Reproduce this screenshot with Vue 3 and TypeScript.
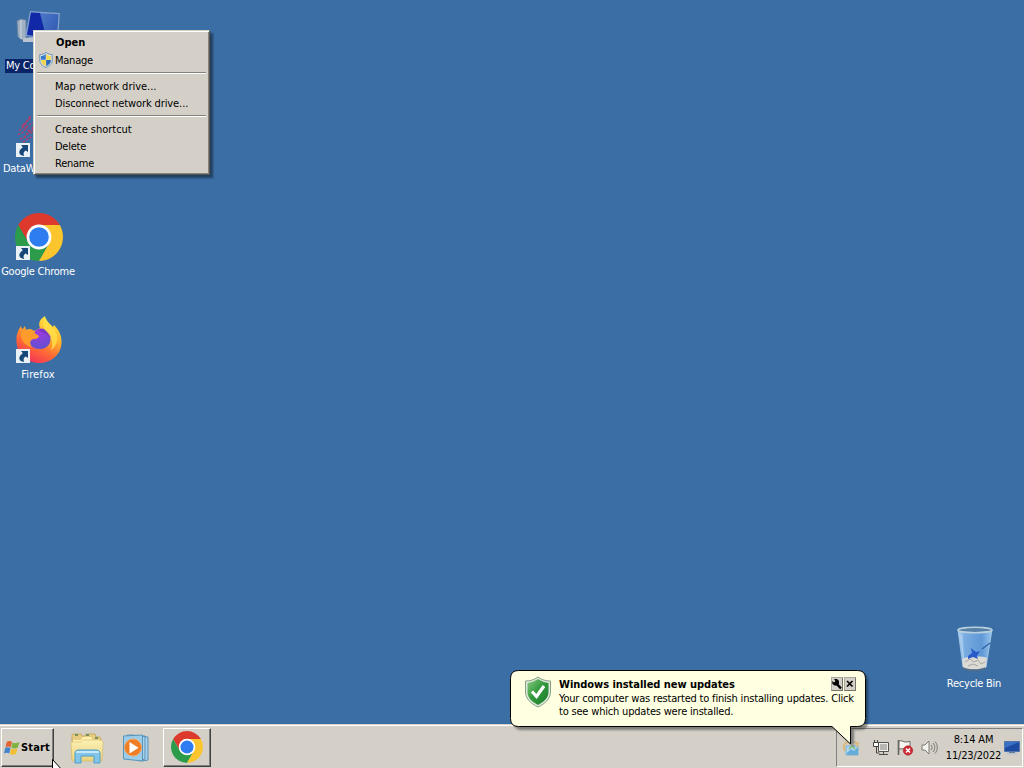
<script setup lang="ts">
interface DesktopItem {
  id: string
  label: string
  shortcut: boolean
}

interface MenuEntry {
  label: string
  bold?: boolean
  shield?: boolean
  spacing?: 'wide' | 'medium'
}

const items: DesktopItem[] = [
  { id: 'computer', label: 'My Co', shortcut: false },
  { id: 'dataw', label: 'DataW', shortcut: true },
  { id: 'chrome', label: 'Google Chrome', shortcut: true },
  { id: 'firefox', label: 'Firefox', shortcut: true },
  { id: 'recycle', label: 'Recycle Bin', shortcut: false },
]

const menu: MenuEntry[][] = [
  [{ label: 'Open', bold: true }, { label: 'Manage', shield: true }],
  [
    { label: 'Map network drive...', spacing: 'wide' },
    { label: 'Disconnect network drive...', spacing: 'medium' },
  ],
  [{ label: 'Create shortcut', spacing: 'wide' }, { label: 'Delete' }, { label: 'Rename' }],
]
</script>

<template>
  <div class="screen">
    <svg class="defs" width="0" height="0" aria-hidden="true">
      <defs>
        <linearGradient id="ffBody" x1=".8" y1="0" x2=".3" y2="1">
          <stop offset="0" stop-color="#fff04a" />
          <stop offset=".38" stop-color="#ffb42c" />
          <stop offset=".68" stop-color="#ff6a35" />
          <stop offset="1" stop-color="#f0305c" />
        </linearGradient>
        <radialGradient id="ffGlobe" cx=".5" cy=".2" r=".8">
          <stop offset="0" stop-color="#a03ae0" />
          <stop offset="1" stop-color="#6050d0" />
        </radialGradient>
        <linearGradient id="glass" x1="0" x2="1">
          <stop offset="0" stop-color="#b4d4f2" />
          <stop offset=".2" stop-color="#78abe0" />
          <stop offset=".7" stop-color="#5f98d6" />
          <stop offset="1" stop-color="#9cc6ee" />
        </linearGradient>
        <linearGradient id="monitor" x1="0" x2="1" y2=".4">
          <stop offset="0" stop-color="#5d86d6" />
          <stop offset="1" stop-color="#3560b4" />
        </linearGradient>
        <linearGradient id="greenShield" x1="0" y1="0" x2="1" y2="1">
          <stop offset="0" stop-color="#8ccc83" />
          <stop offset=".45" stop-color="#359b3e" />
          <stop offset="1" stop-color="#17792a" />
        </linearGradient>
        <linearGradient id="folder" x1="0" y1="0" x2="0" y2="1">
          <stop offset="0" stop-color="#fbf0b4" />
          <stop offset="1" stop-color="#ecd27c" />
        </linearGradient>
      </defs>
      <symbol id="chromeLogo" viewBox="0 0 48 48">
        <path fill="#dd3a2d" d="M3.22 12A24 24 0 0 1 44.78 12H24A12 12 0 0 0 13.61 30Z" />
        <path fill="#2c9c4b" d="M3.22 12A24 24 0 0 0 24 48L34.39 30A12 12 0 0 1 13.61 30Z" />
        <path fill="#fbc52d" d="M24 48A24 24 0 0 0 44.78 12H24A12 12 0 0 1 34.39 30Z" />
        <circle cx="24" cy="24" r="12.400" fill="#fff" />
        <circle cx="24" cy="24" r="9.8" fill="#2e7df0" />
      </symbol>
    </svg>

    <div v-for="item in items" :key="item.id" class="icon" :class="item.id">
      <div class="picture">
        <svg v-if="item.id === 'computer'" viewBox="0 0 48 48">
          <path d="M2 14l4-2 5 1v18l-4 2-4-3z" fill="#9fb0c2" stroke="#6c8098" stroke-width=".7" />
          <path d="M6 13v19" stroke="#cfd9e4" />
          <path d="M15 4l30 2-2 26-33-3z" fill="#7f9fce" />
          <path d="M16 5.500l27.500 1.700-1.500 22-30-2z" fill="url(#monitor)" />
          <path d="M16 5.500l9 .5 6 24-19-2z" fill="#1129a6" />
          <path d="M8 31l12-1 6 5H8z" fill="#b9c4ce" />
        </svg>
        <svg v-else-if="item.id === 'dataw'" viewBox="0 0 48 48">
          <g fill="none" stroke="#b33c68" stroke-width="1.600" stroke-dasharray="2.200 1.600">
            <path d="M4 20c5 0 4-8 12-12" />
            <path d="M3 24c7 1 6-9 15-11" />
            <path d="M5 29c6 0 7-8 14-9" />
            <path d="M8 32c4-2 5-5 12-5M8 14c3 2 5 8 9 9M15 6c-2 6-6 8-9 12M18 17c-3 5-7 6-9 12" />
          </g>
        </svg>
        <svg v-else-if="item.id === 'chrome'"><use href="#chromeLogo" /></svg>
        <svg v-else-if="item.id === 'firefox'" viewBox="0 0 48 48">
          <path
            fill="url(#ffBody)"
            d="M30 0c1 5 4 7 8 11l1-2c5 5 8 11 7.500 18C46 39 36 47 24 47S2 38 1.500 26C1 19 3 14 6 10l1 4 3-4 1 4c3-2 6-1 8 1l6-3c-2-5 0-9 5-12z"
          />
          <path fill="url(#ffGlobe)" d="M21 14c5-3 11-1 13 4 4 8-1 15-9 15-8 0-12-5-11-11 4 2 8 0 9-3-4-1-4-3-2-5z" />
          <path fill="#ff9a2d" d="M6 12l5 3c4-1 7 0 9 3l4 2c-1 3-4 3-6 3-4 2-3 5-1 8-7-1-11-6-11-13z" />
          <path fill="#7d35c4" d="M23 14c3-2 6-1 8 1 3 1 5 4 5 7-4-4-8-5-13-8z" />
          <path fill="#ffe14b" d="M31 2c1 6 9 9 11 18 1 6-2 12-6 14 3-8 0-14-5-19-4-4-4-8 0-13z" opacity=".75" />
        </svg>
        <svg v-else viewBox="0 0 48 48">
          <path d="M7 5l5 37c1 4 22 4 23 0L41 5z" fill="url(#glass)" stroke="#a8cbed" stroke-width=".8" />
          <path d="M11 34c6-3 20-3 25-1l-1 9c-4 3-19 3-23 0z" fill="#dcdad5" />
          <path d="M14 37l5-3 4 3 4-2 3 4 4-2M17 41l5-2 5 2" fill="none" stroke="#aaa7a1" />
          <path d="M17 31l4-3-1-5 5 4 4-1-3 5 1 3-5-2-5 2z" fill="#2a5bc8" />
          <path d="M31 24l8-6" stroke="#2c60a8" stroke-width="1.200" />
          <path d="M10 10l3 27" stroke="#c7e1f6" stroke-width="1.200" opacity=".6" />
          <ellipse cx="24" cy="5" rx="17" ry="2.700" fill="#557fa7" stroke="#b9d0df" stroke-width="1.600" />
          <path d="M12 43c5 3 17 3 22 0" fill="none" stroke="#536d87" stroke-width="1.800" />
        </svg>
        <svg v-if="item.shortcut" class="arrow" viewBox="0 0 14 14">
          <path d="M0 0h14v14H0z" fill="#e9f0f6" />
          <path d="M5 2h7v7L9.800 7.500C7.500 8.500 7 10.500 8.200 13 2.500 12.500 1.500 8 6.800 4.300z" fill="#174779" />
        </svg>
      </div>
      <span class="label">{{ item.label }}</span>
    </div>

    <nav class="menu">
      <ul v-for="(group, g) in menu" :key="g" class="group">
        <li v-for="entry in group" :key="entry.label" :class="[entry.spacing, { bold: entry.bold, tall: entry.shield }]">
          <svg v-if="entry.shield" class="uac" viewBox="0 0 14 16">
            <path d="M7 .5C5 2 3 2.500.8 2.500V8c0 4 3 6 6.200 7.500C10.200 14 13.200 12 13.200 8V2.500C11 2.500 9 2 7 .5z" fill="#d8e6f2" stroke="#6f91b4" />
            <path d="M6.800 2v5.700H2V4c2 0 3.400-.7 4.800-2z" fill="#3a79ca" />
            <path d="M7.200 2v5.700H12V4c-2 0-3.400-.7-4.800-2z" fill="#f6da4d" />
            <path d="M2 8h4.800v6.200C4 12.700 2 11.200 2 8z" fill="#f4d448" />
            <path d="M7.200 8H12c0 3.200-2 4.700-4.800 6.200z" fill="#2d68b8" />
          </svg>
          <span>{{ entry.label }}</span>
        </li>
      </ul>
    </nav>

    <footer class="taskbar">
      <button class="start" type="button">
        <svg viewBox="0 0 16 16">
          <path d="M2.800 1.800c2-1.100 3.700-.8 5.200.2L6.700 7.300c-1.600-1-3.200-1-5.200-.1z" fill="#e36432" />
          <path d="M8.600 2.400c2 1.100 4 1 6.800-.3L13.800 7.700c-2.200 1.100-4.500 1.100-6.500 0z" fill="#7fb443" />
          <path d="M1.200 8c2-1 3.800-.8 5.300.1L5.200 13.400c-1.600-1-3.300-1-5.200 0z" fill="#4283cb" />
          <path d="M7.100 8.500c2 1.100 4.200 1.100 6.500 0L12 14c-2.200 1.100-4.300 1-6.300-.2z" fill="#f2bf38" />
        </svg>
        <span>Start</span>
      </button>
      <div class="launch">
        <svg class="explorer" viewBox="0 0 34 32">
          <path d="M2 6V3l1-1h8l1 2h3l1-2h9l1 3h4l1 2v20H2z" fill="#e5cc80" stroke="#c3a452" stroke-width=".8" />
          <path d="M3 8h8l2-3h8l2 3h8v20H3z" fill="#fff1ae" />
          <path d="M1 10h10l2-2h18l2 2-1 19H2z" fill="url(#folder)" stroke="#d3b967" stroke-width=".6" />
          <path d="M5 3h3M16 3h3M25 6h3" stroke="#557f57" stroke-width="1.500" />
          <path d="M5 31V22c0-3 1-4 4-4h17c3 0 4 1 4 4v9h-6v-7H11v7z" fill="#83c4e9" stroke="#4c9fcd" />
          <path d="M6 20h23" stroke="#c7e8f7" stroke-width="2" />
        </svg>
        <svg class="player" viewBox="0 0 28 28">
          <path d="M8 1l18 2v23l-7 1zM5 1l18 1v23l-6 2z" fill="#aad2e9" stroke="#5791b9" />
          <path d="M1.500 2l19-1v26l-19-2z" fill="#9ccce8" stroke="#5795bd" />
          <circle cx="11" cy="13.500" r="8.500" fill="#ee7d25" stroke="#f6a75f" />
          <path d="M7.500 8v11.500l9-5.700z" fill="#fff" />
        </svg>
        <div class="running"><svg><use href="#chromeLogo" /></svg></div>
      </div>
      <div class="tray">
        <svg class="update" viewBox="0 0 18 18">
          <path d="M4 7h12v9H4z" fill="#aed7ef" stroke="#77b3d6" />
          <path d="M5 14l4-4 3 2 4-4v8H5z" fill="#65add8" />
          <path d="M3 12C0 7 3 3 7 3M12 3l4 1-1 4" fill="none" stroke="#dcb770" stroke-width="1.700" />
          <path d="M7 10l3-3 3 3" fill="none" stroke="#8cbb71" stroke-width="1.500" />
        </svg>
        <svg class="network" viewBox="0 0 17 17">
          <path d="M5.500 3.500h10v9h-10z" fill="#f1f0ec" stroke="#55544f" />
          <path d="M7 5h7v6H7z" fill="#b8b7b4" />
          <path d="M6 15.500h9M10.500 13v2" stroke="#4c4b48" />
          <path d="M.5 3.500h5v4h-5zM1.500 1v2M4.500 1v2M3.500 8v6h3" fill="none" stroke="#44433f" />
          <path d="M1 4h4v3H1z" fill="#fff" />
        </svg>
        <svg class="flag" viewBox="0 0 17 17">
          <path d="M1.500 1v15" stroke="#646360" stroke-width="1.600" />
          <path d="M2 2c3-1 4 1 7 1l4-.5V10c-4 1-7-1-11 0z" fill="#f6f5f1" stroke="#696864" />
          <circle cx="11" cy="11.500" r="4.700" fill="#cf2b36" stroke="#aa1f29" stroke-width=".6" />
          <path d="M9 9.500l4 4m0-4l-4 4" stroke="#fff" stroke-width="1.500" />
        </svg>
        <svg class="sound" viewBox="0 0 17 17">
          <path d="M1 6h3l4-4v13l-4-4H1z" fill="#f4f3ef" stroke="#7c7b77" />
          <path d="M10 6c1.300 1.500 1.300 3.500 0 5M12 4c2.300 2.500 2.300 6.500 0 9M14 2.500c3 3.500 3 8.500 0 12" fill="none" stroke="#7c7b77" />
        </svg>
        <div class="clock"><span>8:14 AM</span><span>11/23/2022</span></div>
        <svg class="peek" viewBox="0 0 16 14">
          <path d="M.5.5h15v10H.5z" fill="#1d4ba0" stroke="#5375ac" />
          <path d="M1 1h14L1 7z" fill="#3970c5" />
          <path d="M3 12.500h10" stroke="#b5c4d2" stroke-width="2" />
          <path d="M5 11.500h6" stroke="#697c91" />
        </svg>
      </div>
    </footer>

    <aside class="balloon">
      <svg class="bubble" viewBox="0 0 364 84">
        <path class="shade" d="M11 4H350q8 0 8 9v40q0 8-8 8H344V78L326 61H11q-7 0-7-7V11q0-7 7-7z" />
        <path class="body" d="M8.500 1.500H347.500q8 0 8 8v40q0 8-8 8H340.500V75L322 57.500H8.500q-8 0-8-8v-40q0-8 8-8z" />
      </svg>
      <svg class="check" viewBox="0 0 28 32">
        <path d="M14 1C10 4 6 5 1.500 5v11c0 7 6 12 12.500 15 6.500-3 12.500-8 12.500-15V5C22 5 18 4 14 1z" fill="#dfe8dc" stroke="#86a184" />
        <path d="M14 3C10.500 5.500 7 6.500 3.500 7v9c0 6 5 10 10.500 13 5.500-3 10.500-7 10.500-13V7C21 6.500 17.500 5.500 14 3z" fill="url(#greenShield)" />
        <path d="M8 15.500l4.500 5L20 10" fill="none" stroke="#fff" stroke-width="3.200" />
      </svg>
      <div class="message">
        <h1>Windows installed new updates</h1>
        <p>Your computer was restarted to finish installing updates. Click</p>
        <p>to see which updates were installed.</p>
      </div>
      <div class="tools">
        <svg viewBox="0 0 10 12">
          <path d="M4 5l5 5.500" stroke="#000" stroke-width="2.600" />
          <path d="M0 3l2 1.500L3.500 3 2 1h3l2 2v2.500L5 7.500H2.500L.5 6z" fill="#000" />
        </svg>
        <svg viewBox="0 0 10 12"><path d="M2 3l5.500 5.500m0-5.500L2 8.500" stroke="#000" stroke-width="1.700" /></svg>
      </div>
    </aside>

    <svg class="cursor" viewBox="0 0 12 20">
      <path d="M.5.500v17l4-4 2.500 6 2.500-1L7 13h5z" fill="#fff" stroke="#000" />
    </svg>
  </div>
</template>

<style>
html,
body {
  overflow: hidden;
}
</style>

<style scoped>
.screen {
  position: relative;
  width: 1024px;
  height: 768px;
  overflow: hidden;
  display: flex;
  flex-direction: column;
  justify-content: flex-end;
  background: #3b6ea5;
  color: #000;
  font: 11px/13px 'DejaVu Sans Condensed', 'DejaVu Sans', sans-serif;
  font-stretch: condensed;
  letter-spacing: -0.25px;
  cursor: default;
}
svg {
  display: block;
  flex: none;
}
.defs {
  position: absolute;
}
.icon {
  position: absolute;
  left: -1px;
  width: 78px;
  display: flex;
  flex-direction: column;
  align-items: center;
  gap: 4px;
  color: #fff;
}
.computer { top: 7px; }
.dataw { top: 110px; }
.chrome { top: 213px; }
.firefox { top: 316px; }
.recycle { left: 935px; top: 625px; }
.picture {
  position: relative;
  width: 48px;
  height: 48px;
  margin-left: 2px;
}
.picture > svg:first-child {
  width: 48px;
  height: 48px;
}
.arrow {
  position: absolute;
  left: 1px;
  bottom: 1px;
  width: 14px;
  height: 14px;
}
.label {
  padding: 0 1px 1px;
  white-space: nowrap;
}
.computer .label {
  align-self: flex-start;
  margin-left: 6px;
  background: #0a246a;
}
.dataw .label {
  align-self: flex-start;
  margin-left: 3px;
}
.firefox .label {
  letter-spacing: 0.1px;
}
.menu {
  position: absolute;
  left: 33px;
  top: 30px;
  width: 177px;
  height: 145px;
  box-sizing: border-box;
  padding: 2px 3px 3px;
  border: 1px solid;
  border-color: #d4d0c8 #55534f #55534f #d4d0c8;
  background: #d4d0c8;
  box-shadow: inset 1px 1px #fff, inset -1px -1px #88847e, 3px 3px 2px rgba(0, 0, 0, 0.42);
}
.group {
  margin: 0;
  padding: 0;
  list-style: none;
}
.group + .group {
  margin-top: 4px;
  padding-top: 4px;
  border-top: 1px solid #85827c;
  box-shadow: inset 0 1px #fff;
}
.group li {
  position: relative;
  display: flex;
  align-items: center;
  box-sizing: border-box;
  height: 17px;
  padding: 2px 0 0 18px;
}
.group li.tall {
  height: 18px;
}
.group li.bold {
  padding-left: 19px;
  font-weight: bold;
  letter-spacing: 0;
}
.wide {
  letter-spacing: -0.02px;
}
.medium {
  letter-spacing: -0.1px;
}
.uac {
  position: absolute;
  left: 2px;
  top: 2px;
  width: 14px;
  height: 16px;
}
.taskbar {
  height: 44px;
  box-sizing: border-box;
  display: flex;
  align-items: flex-start;
  padding-top: 4px;
  background: #d4d0c8;
  box-shadow: inset 0 1px #d4d0c8, inset 0 2px #fff;
}
.start {
  width: 53px;
  height: 39px;
  box-sizing: border-box;
  margin-left: 1px;
  padding: 0 0 0 2px;
  display: flex;
  align-items: center;
  gap: 1px;
  border: 1px solid;
  border-color: #fff #404040 #404040 #fff;
  background: #d4d0c8;
  box-shadow: inset -1px -1px #808080;
  color: #000;
  font: bold 11px/13px 'DejaVu Sans Condensed', sans-serif;
  letter-spacing: 0.15px;
}
.start svg {
  width: 16px;
  height: 16px;
}
.launch {
  display: flex;
  align-items: center;
  height: 39px;
}
.explorer {
  width: 34px;
  height: 32px;
  margin-left: 16px;
}
.player {
  width: 28px;
  height: 28px;
  margin: 0 13px 0 18px;
}
.running {
  width: 48px;
  height: 39px;
  box-sizing: border-box;
  padding: 2px 0 0 7px;
  border: 1px solid;
  border-color: #fff #404040 #404040 #fff;
  box-shadow: inset -1px -1px #808080;
}
.running svg {
  width: 32px;
  height: 32px;
}
.tray {
  width: 187px;
  height: 39px;
  box-sizing: border-box;
  margin: 0 1px 0 auto;
  padding-left: 5px;
  display: flex;
  align-items: center;
  border: 1px solid;
  border-color: #808080 #fff #fff #808080;
}
.update {
  width: 18px;
  height: 18px;
}
.network {
  width: 17px;
  height: 17px;
  margin-left: 13px;
}
.flag {
  width: 17px;
  height: 17px;
  margin-left: 7px;
}
.sound {
  width: 17px;
  height: 17px;
  margin-left: 7px;
}
.clock {
  width: 57px;
  margin-left: 7px;
  display: flex;
  flex-direction: column;
  align-items: center;
  gap: 3px;
  letter-spacing: -0.15px;
}
.peek {
  width: 16px;
  height: 14px;
  margin-left: 2px;
}
.balloon {
  position: absolute;
  left: 510px;
  top: 669px;
  width: 364px;
  height: 84px;
}
.bubble {
  position: absolute;
  width: 364px;
  height: 84px;
}
.shade {
  fill: rgba(0, 0, 0, 0.4);
  filter: blur(1px);
}
.body {
  fill: #ffffe1;
  stroke: #000;
}
.check {
  position: absolute;
  left: 14px;
  top: 7px;
  width: 28px;
  height: 32px;
}
.message {
  position: absolute;
  left: 49px;
  top: 9px;
  white-space: nowrap;
}
.message h1,
.message p {
  margin: 0;
  font-size: 11px;
  line-height: 13px;
  letter-spacing: -0.19px;
}
.message h1 {
  line-height: 14px;
  letter-spacing: -0.04px;
}
.tools {
  position: absolute;
  left: 321px;
  top: 8px;
  display: flex;
  gap: 1px;
}
.tools svg {
  width: 10px;
  height: 12px;
  background: #d4d0c8;
  border: 1px solid;
  border-color: #aaa79f #77746e #77746e #aaa79f;
}
.cursor {
  position: absolute;
  left: 52px;
  top: 759px;
  width: 12px;
  height: 20px;
}
</style>
